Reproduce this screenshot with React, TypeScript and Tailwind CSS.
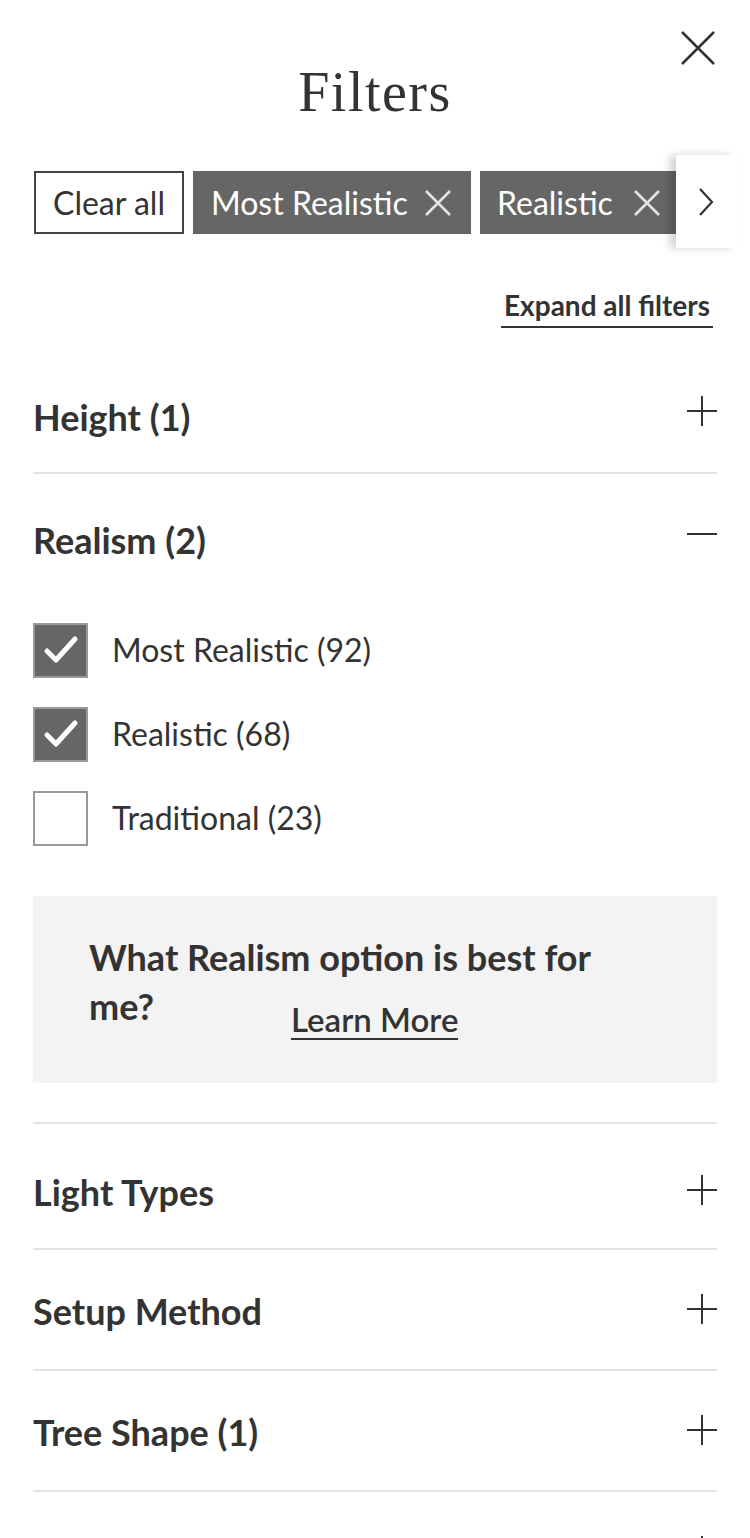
import React from "react";

const Plus = () => (
  <svg width="32" height="32" viewBox="0 0 32 32" className="shrink-0">
    <path d="M16 1v30M1 16h30" stroke="#333" strokeWidth="2" fill="none" />
  </svg>
);

const Minus = () => (
  <svg width="32" height="32" viewBox="0 0 32 32" className="shrink-0">
    <path d="M1 16h30" stroke="#333" strokeWidth="2" fill="none" />
  </svg>
);

const SmallX = ({ color }: { color: string }) => (
  <svg width="28" height="28" viewBox="0 0 28 28" className="shrink-0">
    <path d="M2 2l24 24M26 2L2 26" stroke={color} strokeWidth="2.5" fill="none" />
  </svg>
);

const Check = () => (
  <svg width="36" height="30" viewBox="0 0 36 30">
    <path d="M4 16l9 9L32 4" stroke="#fff" strokeWidth="5" fill="none" strokeLinecap="round" strokeLinejoin="round" />
  </svg>
);

function CheckRow({ label, checked }: { label: string; checked: boolean }) {
  return (
    <div className="flex items-center gap-[24px]">
      <div
        className={
          checked
            ? "w-[55px] h-[55px] bg-[#666] border-2 border-[#999] flex items-center justify-center"
            : "w-[55px] h-[55px] bg-white border-2 border-[#999]"
        }
      >
        {checked && <Check />}
      </div>
      <span className="text-[32px] text-[#333]">{label}</span>
    </div>
  );
}

type SectionKind = "top" | "open" | "first" | "plain";

function Section({ title, kind = "plain" }: { title: string; kind?: SectionKind }) {
  const row =
    kind === "open"
      ? "h-[121px] flex items-center justify-between"
      : kind === "top"
        ? "h-[123px] flex items-center justify-between border-b-2 border-[#e2e2e2]"
        : kind === "first"
          ? "h-[126px] pt-[8px] flex items-center justify-between border-b-2 border-[#e2e2e2]"
          : "h-[121px] flex items-center justify-between border-b-2 border-[#e2e2e2]";
  const label =
    kind === "top" || kind === "open"
      ? "text-[36px] font-bold text-[#333] pt-[12px]"
      : "text-[36px] font-bold text-[#333] pt-[4px]";
  return (
    <div className={row}>
      <span className={label}>{title}</span>
      <span className="pr-[1px] translate-x-[2px]">{kind === "open" ? <Minus /> : <Plus />}</span>
    </div>
  );
}

export default function App() {
  return (
    <div
      className="w-[750px] h-[1538px] bg-white text-[#333] overflow-hidden"
      style={{ fontFamily: "Lato, 'Open Sans', sans-serif" }}
    >
      {/* header */}
      <div className="relative h-[155px]">
        <button className="absolute right-[34px] top-[31px] w-[36px] h-[34px] flex items-center justify-center">
          <svg width="36" height="34" viewBox="0 0 36 34">
            <path d="M2 1l32 32M34 1L2 33" stroke="#333" strokeWidth="2.5" fill="none" />
          </svg>
        </button>
        <h1 className="pt-[64px] text-center text-[56px] leading-[1] tracking-[1.5px] text-[#333] font-['Liberation_Serif',serif]">
          Filters
        </h1>
      </div>

      {/* active filter chips */}
      <div className="relative h-[93px]">
        <div className="flex gap-[9px] pl-[34px] pt-[16px] whitespace-nowrap overflow-hidden">
          <div className="h-[63px] w-[150px] border-2 border-[#444] flex items-center justify-center text-[32px] text-[#333] shrink-0">
            Clear all
          </div>
          <div className="h-[63px] w-[278px] bg-[#666] flex items-center pl-[18px] gap-[16px] text-[32px] text-white shrink-0">
            <span>Most Realistic</span>
            <SmallX color="#e6e6e6" />
          </div>
          <div className="h-[63px] w-[230px] bg-[#666] flex items-center pl-[17px] gap-[20px] text-[32px] text-white shrink-0">
            <span>Realistic</span>
            <SmallX color="#e6e6e6" />
          </div>
        </div>
        <div className="absolute left-[676px] top-0 w-[60px] h-[93px] bg-white shadow-[-6px_0_8px_rgba(0,0,0,0.18)] flex items-center justify-center">
          <svg width="16" height="28" viewBox="0 0 16 28">
            <path d="M2 1l12 13L2 27" stroke="#333" strokeWidth="2.2" fill="none" />
          </svg>
        </div>
      </div>

      {/* expand link */}
      <div className="flex justify-end pr-[37px] pt-[41px]">
        <span className="inline-block border-b-2 border-[#333] px-[3px] pb-[3px] text-[28px] font-bold leading-[1.2] text-[#333]">
          Expand all filters
        </span>
      </div>

      <div className="mx-[33px] mt-[23px]">
        <Section title="Height (1)" kind="top" />
        <Section title="Realism (2)" kind="open" />

        <div className="flex flex-col gap-[29px] pt-[28px]">
          <CheckRow label="Most Realistic (92)" checked />
          <CheckRow label="Realistic (68)" checked />
          <CheckRow label="Traditional (23)" checked={false} />
        </div>

        <div className="mt-[50px] h-[187px] bg-[#f3f3f3] pl-[56px] pt-[37px]">
          <p className="max-w-[530px] text-[36px] font-bold leading-[49px] text-[#333]">
            What Realism option is best for me?
            <span className="inline-block ml-[137px] border-b-2 border-[#333] text-[33px] font-semibold leading-[38px] relative top-[12px]">
              Learn More
            </span>
          </p>
        </div>

        <div className="mt-[39px] border-t-2 border-[#e2e2e2]">
          <Section title="Light Types" kind="first" />
          <Section title="Setup Method" />
          <Section title="Tree Shape (1)" />
          <Section title="Color" />
        </div>
      </div>
    </div>
  );
}
